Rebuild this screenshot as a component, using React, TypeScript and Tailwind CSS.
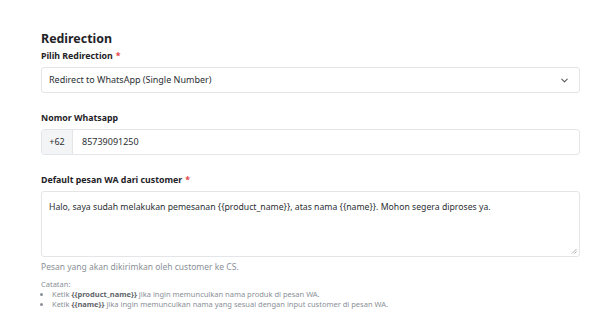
import { ChevronDown } from "lucide-react";

function Label({ children, required }: { children: React.ReactNode; required?: boolean }) {
  return (
    <div className="text-[8.8px] font-bold leading-[13px] text-[#1f2328]">
      {children}
      {required && <span className="ml-[3px] text-[#e5484d]">*</span>}
    </div>
  );
}

export default function App() {
  return (
    <div
      className="h-[327px] w-[604px] bg-white pl-[41px] pr-[24px] pt-[30px]"
      style={{ fontFamily: '"Noto Sans", "Open Sans", sans-serif' }}
    >
      <h2 className="text-[12.4px] font-bold leading-[17px] text-[#1f2328]">Redirection</h2>
      <div className="mt-[3px]">
        <Label required>Pilih Redirection</Label>
        <div className="mt-[4px] flex h-[26px] items-center justify-between rounded-[3px] border border-[#e3e5e8] px-[7px] text-[9px] text-[#2b2f33]">
          <span>Redirect to WhatsApp (Single Number)</span>
          <ChevronDown size={11} strokeWidth={2.2} className="mr-[2px] text-[#555]" />
        </div>
      </div>

      <div className="mt-[19px]">
        <Label>Nomor Whatsapp</Label>
        <div className="mt-[4px] flex h-[26px] rounded-[3px] border border-[#e3e5e8] text-[9px] text-[#2b2f33]">
          <div className="flex w-[31px] items-center justify-center border-r border-[#e3e5e8] bg-[#f3f4f6]">+62</div>
          <div className="flex items-center pl-[9px]">85739091250</div>
        </div>
      </div>

      <div className="mt-[19px]">
        <Label required>Default pesan WA dari customer</Label>
        <div className="relative mt-[4px] h-[66px] rounded-[3px] border border-[#e3e5e8] px-[7px] pt-[9px] text-[8.7px] leading-[13px] text-[#2b2f33]">
          Halo, saya sudah melakukan pemesanan {"{{product_name}}"}, atas nama {"{{name}}"}. Mohon segera diproses ya.
          <svg className="absolute bottom-[2px] right-[2px]" width="6" height="6" viewBox="0 0 6 6">
            <path d="M5.5 1 L1 5.5 M5.5 3.5 L3.5 5.5" stroke="#999" strokeWidth="0.8" />
          </svg>
        </div>
        <div className="mt-[4px] text-[8.5px] leading-[12px] text-[#8a9097]">
          Pesan yang akan dikirimkan oleh customer ke CS.
        </div>
        <div className="mt-[6px] text-[7.5px] leading-[10px] text-[#8a9097]">
          <div>Catatan:</div>
          <ul className="list-disc pl-[11px]">
            <li>
              Ketik <b className="font-bold text-[#5f656b]">{"{{product_name}}"}</b> jika ingin memunculkan nama produk di pesan WA.
            </li>
            <li>
              Ketik <b className="font-bold text-[#5f656b]">{"{{name}}"}</b> jika ingin memunculkan nama yang sesuai dengan input customer di pesan WA.
            </li>
          </ul>
        </div>
      </div>
    </div>
  );
}
